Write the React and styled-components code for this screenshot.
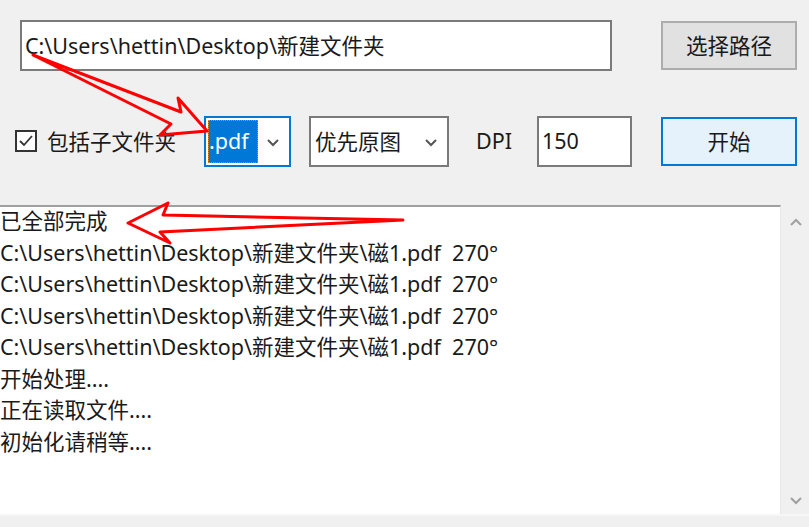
import React from 'react';
import styled, { createGlobalStyle } from 'styled-components';

const GlobalStyle = createGlobalStyle`
  html, body {
    margin: 0;
    padding: 0;
    background: #f0f0f0;
    overflow: hidden;
  }
  body {
    font-family: "Noto Sans", "Noto Sans CJK SC", sans-serif;
    font-size: 21.5px;
    color: #1a1a1a;
  }
`;

const Window = styled.div`
  position: relative;
  width: 809px;
  height: 527px;
  background: #f0f0f0;
  display: flex;
  flex-direction: column;
`;

const TopRow = styled.div`
  display: flex;
  align-items: center;
  padding: 20px 0 0 20px;
  gap: 49px;
`;

const TextBox = styled.div`
  box-sizing: border-box;
  width: ${({ w }) => w}px;
  height: ${({ h }) => h || 51}px;
  background: #fff;
  border: 2px solid ${({ focused }) => (focused ? '#0078d7' : '#7a7a7a')};
  display: flex;
  align-items: center;
  padding: 0 0 2px 3px;
  white-space: nowrap;
  overflow: hidden;
`;

const Button = styled.div`
  box-sizing: border-box;
  width: 136px;
  height: 49px;
  display: flex;
  align-items: center;
  justify-content: center;
  padding-bottom: 2px;
  background: ${({ primary }) => (primary ? '#e5f1fb' : '#e1e1e1')};
  border: 2px solid ${({ primary }) => (primary ? '#0078d7' : '#adadad')};
`;

const OptionRow = styled.div`
  display: flex;
  align-items: center;
  margin-top: 45px;
  padding-left: 15px;
  height: 51px;
`;

const CheckLabel = styled.div`
  display: flex;
  align-items: center;
  gap: 10px;
  width: 189px;
  white-space: nowrap;
  padding-bottom: 2px;
`;

const CheckBox = styled.div`
  box-sizing: border-box;
  width: 22px;
  height: 22px;
  border: 2px solid #333;
  background: #fff;
  display: flex;
  align-items: center;
  justify-content: center;
`;

const Combo = styled.div`
  box-sizing: border-box;
  width: ${({ w }) => w}px;
  height: 51px;
  background: #fff;
  border: 2px solid ${({ focused }) => (focused ? '#0078d7' : '#7a7a7a')};
  display: flex;
  align-items: center;
  justify-content: space-between;
  padding: 0 8px 0 ${({ focused }) => (focused ? 2 : 4)}px;
  margin-right: ${({ mr }) => mr || 0}px;
  white-space: nowrap;
`;

const ComboText = styled.span`
  padding-bottom: 2px;
`;

const Selected = styled.span`
  box-sizing: border-box;
  display: flex;
  align-items: center;
  height: 43px;
  width: 50px;
  padding: 0 0 2px 1px;
  background: #0078d7;
  color: #fff;
  outline: 1px dotted #e08a2c;
  outline-offset: -1px;
  overflow: hidden;
`;

const Label = styled.span`
  width: 61px;
  text-align: left;
  padding-bottom: 2px;
`;

const Spacer = styled.div`
  width: ${({ w }) => w}px;
`;

const LogFrame = styled.div`
  margin-top: 38px;
  flex: 1;
  display: flex;
  flex-direction: column;
`;

const LogBody = styled.div`
  display: flex;
  flex: 1;
`;

const LogText = styled.div`
  box-sizing: border-box;
  width: 781px;
  background: #fff;
  border-top: 2px solid #a0a0a0;
  border-right: 1px solid #e6e6e6;
  line-height: 31.5px;
  white-space: pre;
  overflow: hidden;
`;

const LogLine = styled.div`
  &:first-child {
    margin-top: -2px;
  }
`;

const VScroll = styled.div`
  flex: 1;
  display: flex;
  flex-direction: column;
  justify-content: space-between;
  align-items: center;
  padding: 10px 0 6px 2px;
  background: #f0f0f0;
`;

const HScroll = styled.div`
  height: 11px;
  border-top: 2px solid #f7f7f7;
`;

const Chevron = ({ dir = 'down', color = '#a0a0a0', size = 16 }) => {
  const paths = {
    down: 'M3 6 L8 11 L13 6',
    up: 'M3 10 L8 5 L13 10',
  };
  return (
    <svg width={size} height={size} viewBox="0 0 16 16">
      <path d={paths[dir]} fill="none" stroke={color} strokeWidth="2" />
    </svg>
  );
};

const Arrows = styled.svg`
  position: absolute;
  left: 0;
  top: 0;
  pointer-events: none;
`;

const logLines = [
  '已全部完成',
  'C:\\Users\\hettin\\Desktop\\新建文件夹\\磁1.pdf  270°',
  'C:\\Users\\hettin\\Desktop\\新建文件夹\\磁1.pdf  270°',
  'C:\\Users\\hettin\\Desktop\\新建文件夹\\磁1.pdf  270°',
  'C:\\Users\\hettin\\Desktop\\新建文件夹\\磁1.pdf  270°',
  '开始处理....',
  '正在读取文件....',
  '初始化请稍等....',
];

export default function App() {
  return (
    <Window>
      <GlobalStyle />
      <TopRow>
        <TextBox w={592}>C:\Users\hettin\Desktop\新建文件夹</TextBox>
        <Button>选择路径</Button>
      </TopRow>

      <OptionRow>
        <CheckLabel>
          <CheckBox>
            <svg width="16" height="16" viewBox="0 0 16 16">
              <path d="M2 8 L6 12 L14 3" fill="none" stroke="#333" strokeWidth="1.8" />
            </svg>
          </CheckBox>
          包括子文件夹
        </CheckLabel>
        <Combo w={87} focused mr={18}>
          <Selected>.pdf</Selected>
          <Chevron color="#555" />
        </Combo>
        <Combo w={140} mr={27}>
          <ComboText>优先原图</ComboText>
          <Chevron color="#555" />
        </Combo>
        <Label>DPI</Label>
        <TextBox w={95}>150</TextBox>
        <Spacer w={29} />
        <Button primary>开始</Button>
      </OptionRow>

      <LogFrame>
        <LogBody>
          <LogText>
            {logLines.map((line, i) => (
              <LogLine key={i}>{line}</LogLine>
            ))}
          </LogText>
          <VScroll>
            <Chevron dir="up" />
            <Chevron dir="down" />
          </VScroll>
        </LogBody>
        <HScroll />
      </LogFrame>

      <Arrows width="809" height="527" viewBox="0 0 809 527">
        <path
          d="M33 55 L181 112 L178 98 L207 131 L160 135 L171 124 Z"
          fill="none"
          stroke="#ff0000"
          strokeWidth="3"
          strokeLinejoin="round"
        />
        <path
          d="M403 220 L163 215 L168 203 L128 223 L170 243 L160 232 Z"
          fill="none"
          stroke="#ff0000"
          strokeWidth="3"
          strokeLinejoin="round"
        />
      </Arrows>
    </Window>
  );
}
